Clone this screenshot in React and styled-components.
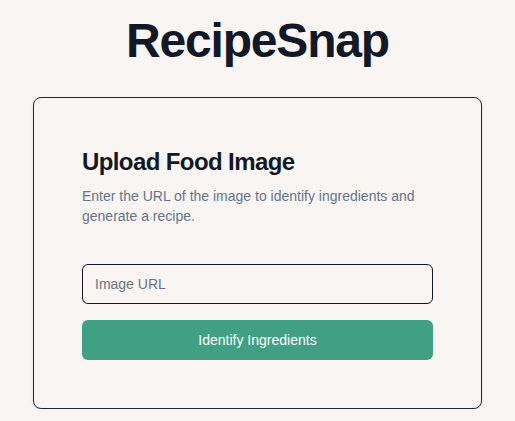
import React from 'react'
import styled, { createGlobalStyle } from 'styled-components'

const GlobalStyle = createGlobalStyle`
    * {
        box-sizing: border-box;
    }
    body {
        margin: 0;
        background: #f9f5f2;
        font-family: "Liberation Sans", Arial, sans-serif;
        color: #111827;
    }
`

export const Page = styled.main`
    display: flex;
    flex-direction: column;
    align-items: center;
    padding-top: 17px;
`
export const Brand = styled.h1`
    margin: 0 0 32px;
    font-size: 48px;
    line-height: 48px;
    font-weight: bold;
    letter-spacing: -0.025em;
    color: #111827;
`
export const Card = styled.section`
    width: 449px;
    padding: 48px;
    border: 1px solid #1f2937;
    border-radius: 8px;
    background: #f9f5f2;
    box-shadow: 0 1px 3px rgba(0, 0, 0, 0.12);
`
export const Title = styled.h2`
    margin: 0 0 8px;
    font-size: 24px;
    line-height: 32px;
    font-weight: bold;
    letter-spacing: -0.025em;
`
export const Description = styled.p`
    margin: 0 0 38px;
    font-size: 14px;
    line-height: 20px;
    color: #64748b;
`
export const Form = styled.form`
    display: flex;
    flex-direction: column;
    gap: 16px;
`
export const Input = styled.input`
    width: 100%;
    height: 40px;
    padding: 0 12px;
    border: 1px solid #111827;
    border-radius: 6px;
    background: transparent;
    font-family: inherit;
    font-size: 14px;
    color: #111827;
    &::placeholder {
        color: #6b7280;
    }
    &:focus {
        outline: none;
    }
`
export const SubmitButton = styled.button`
    width: 100%;
    height: 40px;
    border: none;
    border-radius: 6px;
    background: #40a083;
    color: #fff;
    font-family: inherit;
    font-size: 14px;
    &:hover {
        cursor: pointer;
        background: #378d73;
    }
`

export default function App() {
    return (
        <>
            <GlobalStyle />
            <Page>
                <Brand>RecipeSnap</Brand>
                <Card>
                    <Title>Upload Food Image</Title>
                    <Description>
                        Enter the URL of the image to identify ingredients and generate a recipe.
                    </Description>
                    <Form onSubmit={e => e.preventDefault()}>
                        <Input type="text" placeholder="Image URL" />
                        <SubmitButton type="submit">Identify Ingredients</SubmitButton>
                    </Form>
                </Card>
            </Page>
        </>
    )
}
